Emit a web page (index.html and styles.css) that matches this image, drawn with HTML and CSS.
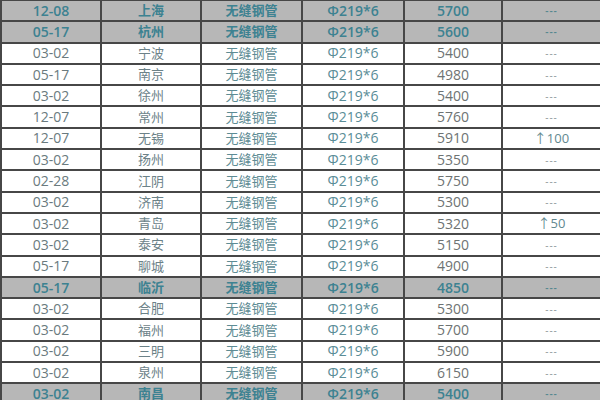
FILE: index.html
```html
<!DOCTYPE html>
<html lang="zh-CN">
<head>
<meta charset="utf-8">
<title>无缝钢管价格</title>
<link rel="stylesheet" href="styles.css">
</head>
<body>
<div class="sheet">
  <div class="row hl"><span>12-08</span><span>上海</span><span>无缝钢管</span><span>Φ219*6</span><span>5700</span><span class="dash">---</span></div>
  <div class="row hl"><span>05-17</span><span>杭州</span><span>无缝钢管</span><span>Φ219*6</span><span>5600</span><span class="dash">---</span></div>
  <div class="row"><span>03-02</span><span>宁波</span><span>无缝钢管</span><span>Φ219*6</span><span>5400</span><span class="dash">---</span></div>
  <div class="row"><span>05-17</span><span>南京</span><span>无缝钢管</span><span>Φ219*6</span><span>4980</span><span class="dash">---</span></div>
  <div class="row"><span>03-02</span><span>徐州</span><span>无缝钢管</span><span>Φ219*6</span><span>5400</span><span class="dash">---</span></div>
  <div class="row"><span>12-07</span><span>常州</span><span>无缝钢管</span><span>Φ219*6</span><span>5760</span><span class="dash">---</span></div>
  <div class="row"><span>12-07</span><span>无锡</span><span>无缝钢管</span><span>Φ219*6</span><span>5910</span><span class="up">↑100</span></div>
  <div class="row"><span>03-02</span><span>扬州</span><span>无缝钢管</span><span>Φ219*6</span><span>5350</span><span class="dash">---</span></div>
  <div class="row"><span>02-28</span><span>江阴</span><span>无缝钢管</span><span>Φ219*6</span><span>5750</span><span class="dash">---</span></div>
  <div class="row"><span>03-02</span><span>济南</span><span>无缝钢管</span><span>Φ219*6</span><span>5300</span><span class="dash">---</span></div>
  <div class="row"><span>03-02</span><span>青岛</span><span>无缝钢管</span><span>Φ219*6</span><span>5320</span><span class="up">↑50</span></div>
  <div class="row"><span>03-02</span><span>泰安</span><span>无缝钢管</span><span>Φ219*6</span><span>5150</span><span class="dash">---</span></div>
  <div class="row"><span>05-17</span><span>聊城</span><span>无缝钢管</span><span>Φ219*6</span><span>4900</span><span class="dash">---</span></div>
  <div class="row hl"><span>05-17</span><span>临沂</span><span>无缝钢管</span><span>Φ219*6</span><span>4850</span><span class="dash">---</span></div>
  <div class="row"><span>03-02</span><span>合肥</span><span>无缝钢管</span><span>Φ219*6</span><span>5300</span><span class="dash">---</span></div>
  <div class="row"><span>03-02</span><span>福州</span><span>无缝钢管</span><span>Φ219*6</span><span>5700</span><span class="dash">---</span></div>
  <div class="row"><span>03-02</span><span>三明</span><span>无缝钢管</span><span>Φ219*6</span><span>5900</span><span class="dash">---</span></div>
  <div class="row"><span>03-02</span><span>泉州</span><span>无缝钢管</span><span>Φ219*6</span><span>6150</span><span class="dash">---</span></div>
  <div class="row hl"><span>03-02</span><span>南昌</span><span>无缝钢管</span><span>Φ219*6</span><span>5400</span><span class="dash">---</span></div>
</div>
</body>
</html>
```

FILE: styles.css
```css
html, body {
  margin: 0;
  padding: 0;
  background: #ffffff;
  overflow: hidden;
}

.sheet {
  width: 600px;
  height: 400px;
  overflow: hidden;
  box-sizing: border-box;
  padding: 1px 0 0 2px;
  background: #474747;
  display: grid;
  grid-auto-rows: 19.3px;
  row-gap: 2px;
  font-family: "Open Sans", "Noto Sans CJK SC", sans-serif;
  font-size: 14px;
}

.row {
  display: grid;
  grid-template-columns: 98px 98px 99px 100px 96px 1fr;
  column-gap: 2px;
}

.row span {
  background: #ffffff;
  display: flex;
  align-items: center;
  justify-content: center;
  line-height: 1;
  color: #6a7a7e;
}

.row span:nth-child(2),
.row span:nth-child(3) {
  font-size: 13px;
}

.row span:nth-child(2) {
  color: #6c8288;
}

.row span:nth-child(3) {
  color: #5e8c94;
}

.row span:nth-child(4) {
  color: #5a8d97;
}

.row span:nth-child(5) {
  color: #6e7373;
}

.row span.dash {
  font-size: 10px;
  color: #8d9699;
  letter-spacing: 1px;
}

.row span.up {
  color: #62888f;
  font-size: 13px;
}

.row.hl span {
  background: #b7b7b7;
  color: #3d8291;
  font-weight: 600;
}

.row.hl span.dash {
  color: #55878f;
}
```
